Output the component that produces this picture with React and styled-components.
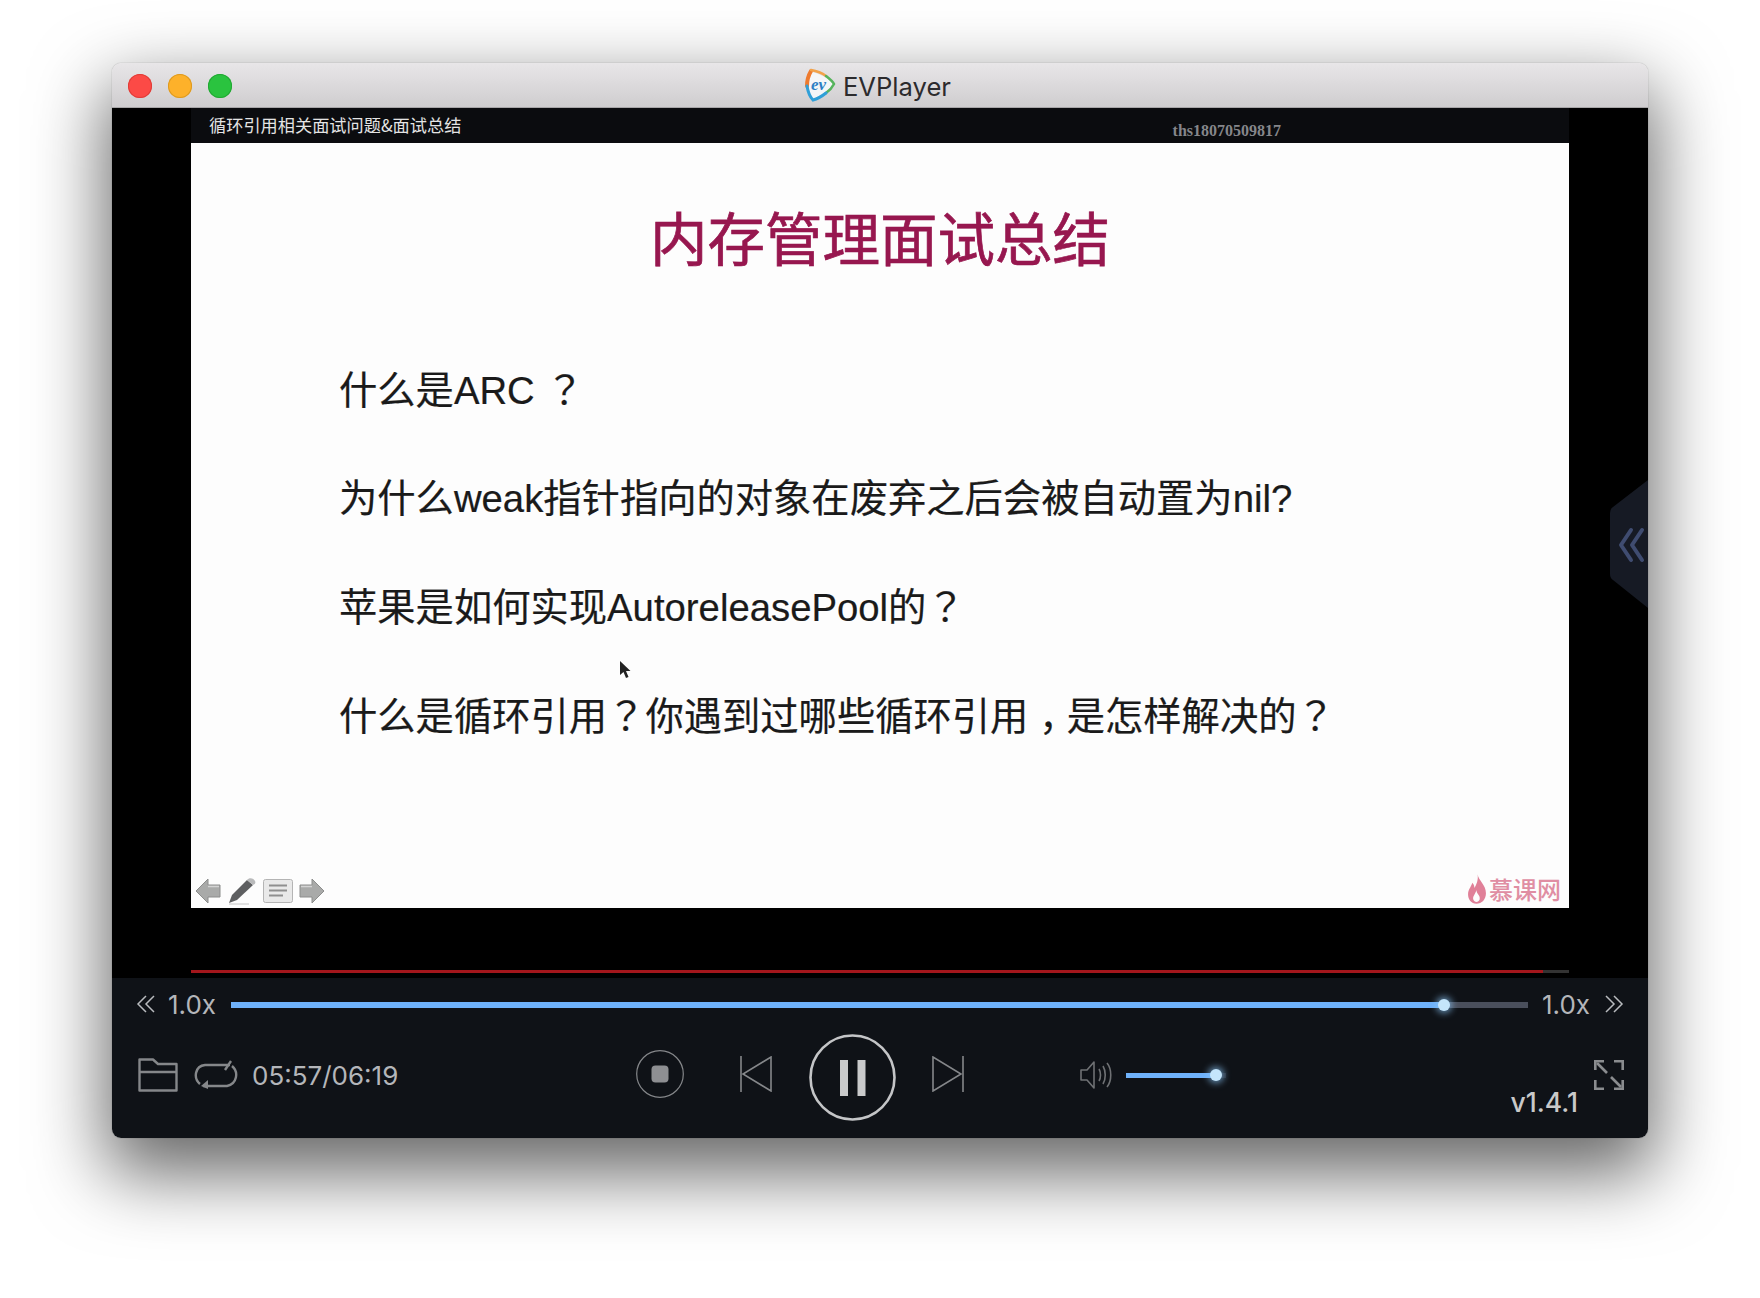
import React from 'react'
import styled, { createGlobalStyle } from 'styled-components'

const Global = createGlobalStyle`
html, body {
  margin: 0;
  padding: 0;
  background: #ffffff;
}
body {
  width: 1760px;
  height: 1298px;
  overflow: hidden;
  font-family: "Inter", "Liberation Sans", sans-serif;
}
`

const Page = styled.div`
width: 1760px;
height: 1298px;
padding: 63px 0 0 112px;
box-sizing: border-box;
`

const Win = styled.div`
width: 1536px;
height: 1075px;
border-radius: 9px;
overflow: hidden;
display: flex;
flex-direction: column;
box-shadow: 0 30px 72px 6px rgba(0,0,0,.6), 0 0 1px rgba(0,0,0,.5);
`

const TitleBar = styled.div`
height: 45px;
flex: none;
position: relative;
display: flex;
align-items: center;
justify-content: center;
gap: 6px;
background: linear-gradient(#e8e6e8, #cfcdcf);
border-bottom: 1px solid #a8a6a8;
box-sizing: border-box;
padding-right: 6px;
`

const Lights = styled.div`
position: absolute;
left: 16px;
top: 11px;
display: flex;
gap: 16px;
`

const Light = styled.span`
width: 24px;
height: 24px;
border-radius: 50%;
background: ${p => p.$color};
box-shadow: inset 0 0 0 1px ${p => p.$edge};
`

const TitleText = styled.span`
font-size: 25.6px;
color: #2c2b2d;
line-height: 30px;
margin-top: 3px;
`

const Video = styled.div`
flex: none;
height: 870px;
background: #000;
padding: 0 79px;
box-sizing: border-box;
display: flex;
flex-direction: column;
position: relative;
`

const VideoHeader = styled.div`
height: 35px;
flex: none;
background: #0b0c0f;
display: flex;
align-items: center;
justify-content: space-between;
padding: 0 288px 0 18px;
`

const LessonName = styled.span`
font-family: "Noto Sans CJK SC", sans-serif;
font-size: 17.2px;
color: #e4e4e4;
margin-top: -2px;
`

const Watermark = styled.span`
font-family: "Liberation Serif", serif;
font-weight: 700;
font-size: 16px;
color: #85868a;
margin-top: 10px;
`

const Slide = styled.div`
flex: none;
height: 765px;
background: #fdfdfd;
display: flex;
flex-direction: column;
position: relative;
font-family: "Liberation Sans", "Noto Sans CJK SC", sans-serif;
`

const SlideTitle = styled.div`
padding-top: 66px;
line-height: 64px;
font-size: 57.5px;
text-align: center;
color: #97174f;
-webkit-text-stroke: .7px #97174f;
`

const Lines = styled.div`
margin-top: 63.5px;
padding-left: 148px;
`

const Line = styled.div`
height: 108.7px;
line-height: 108.7px;
font-size: 38.3px;
color: #1a1a1a;
white-space: pre;
-webkit-text-stroke: .2px #1a1a1a;
`

/* the traditional cut of the font centres full-width punctuation like the slide does */
const Punct = styled.span`
font-family: "Noto Sans CJK TC", sans-serif;
line-height: 0;
`

/* low comma stays in the simplified cut, halved by the font and padded back to a full em */
const Comma = styled.span`
font-feature-settings: "halt";
padding: 0 .22em 0 .28em;
`

const SlideFoot = styled.div`
margin-top: auto;
height: 34px;
padding: 0 8px 0 4px;
display: flex;
align-items: center;
justify-content: space-between;
`

const NavIcons = styled.div`
display: flex;
align-items: center;
gap: 6px;
`

const Brand = styled.div`
display: flex;
align-items: center;
gap: 2px;
font-family: "Noto Sans CJK SC", sans-serif;
font-size: 24px;
font-weight: 500;
line-height: 30px;
color: #e08ea3;
margin-top: -4px;
`

const Cursor = styled.svg`
position: absolute;
left: 428px;
top: 518px;
`

const SideTab = styled.svg`
position: absolute;
right: 0;
top: 372px;
`

const RedTrack = styled.div`
margin-top: 62px;
height: 3px;
background: #333;
`

const RedFill = styled.div`
height: 100%;
background: #a3161c;
`

const Controls = styled.div`
flex: 1;
background: #0f1217;
color: #b4b6ba;
`

const SpeedRow = styled.div`
height: 54px;
padding: 0 24px;
display: flex;
align-items: center;
`

const SpeedText = styled.span`
font-size: 26px;
line-height: 30px;
color: #b4b6ba;
margin: 0 ${p => p.$right}px 0 ${p => p.$left}px;
`

const ChevronBox = styled.svg`
display: block;
flex: none;
margin-top: -3px;
transform: ${p => (p.$flip ? 'scaleX(-1)' : 'none')};
`

const Track = styled.div`
flex: 1;
height: 6px;
position: relative;
background: ${p => p.$rest};
`

const TrackFill = styled.div`
height: 100%;
background: #6fb2fb;
`

const Thumb = styled.span`
position: absolute;
top: 50%;
width: 12px;
height: 12px;
margin: -6px 0 0 -6px;
border-radius: 50%;
background: #c5e6fb;
box-shadow: 0 0 7px 2px rgba(140, 200, 250, .7);
`

const MainRow = styled.div`
height: 86px;
padding: 0 24px 0 26px;
display: flex;
align-items: center;
`

const TimeText = styled.span`
width: 146px;
flex: none;
font-size: 26px;
line-height: 30px;
color: #b4b6ba;
margin-left: 14px;
margin-top: 1px;
white-space: nowrap;
`

const PlainIcon = styled.svg`
display: block;
flex: none;
margin-left: ${p => p.$left || 0}px;
margin-top: ${p => p.$top || 0}px;
`

const VolumeTrack = styled(Track)`
flex: none;
width: 100px;
height: 5px;
margin-left: 14px;
`

const RightGroup = styled.div`
margin-left: auto;
display: flex;
align-items: center;
gap: 16px;
`

const Version = styled.span`
font-size: 26.5px;
font-weight: 500;
line-height: 30px;
color: #c9c9c9;
margin-top: 54px;
`

function AppIcon() {
  return (
    <svg width="34" height="36" viewBox="0 0 34 36">
      <path d="M8 5 C16 6 25 11 30 17 C25 24 16 30 10 32 C5 26 4 12 8 5Z" fill="#f5f6f8" />
      <path d="M8 4 C5 9 4 14 4 19" fill="none" stroke="#ee7a2e" strokeWidth="4" strokeLinecap="round" />
      <path d="M8 3 C14 4 19 6 23 9" fill="none" stroke="#f2a24a" strokeWidth="2.5" strokeLinecap="round" />
      <path d="M23 9 C27 12 30 15 31 17 C29 21 26 24 23 26" fill="none" stroke="#56b45c" strokeWidth="2.5" strokeLinecap="round" />
      <path d="M23 26 C18 30 14 32 10 33 C7 30 5 25 4 19" fill="none" stroke="#2f9fd8" strokeWidth="3" strokeLinecap="round" />
      <text x="8" y="23" fontSize="17" fontStyle="italic" fontWeight="700" fontFamily="Liberation Serif, serif" fill="#2f7fc4">ev</text>
    </svg>
  )
}

function BackArrow({ flip }) {
  return (
    <svg width="26" height="26" viewBox="0 0 26 26" style={flip ? { transform: 'scaleX(-1)' } : undefined}>
      <path d="M1 13 L13 1 V7 H25 V19 H13 V25Z" fill="#a9aaa9" stroke="#8c8d8c" strokeWidth="1" strokeLinejoin="round" />
      <path d="M13 8.5 H24" stroke="#d4d4d4" strokeWidth="1.5" />
    </svg>
  )
}

function Pen() {
  return (
    <svg width="30" height="28" viewBox="0 0 30 28">
      <path d="M2 26 L5 18 L20 3 L26 8 L10 23Z" fill="#5e5f61" />
      <path d="M20 3 C22 0 27 1 28 4 C29 6 28 7 26 8Z" fill="#b9babb" />
      <path d="M2 27 H22" stroke="#c4c4c4" strokeWidth="1" />
    </svg>
  )
}

function ListCard() {
  return (
    <svg width="30" height="26" viewBox="0 0 30 26">
      <rect x=".5" y="1.5" width="29" height="23" rx="2" fill="#e9e9e9" stroke="#b4b4b4" />
      <path d="M6 7.5H24M6 12.5H24M6 17.5H20" stroke="#8f8f8f" strokeWidth="2" />
    </svg>
  )
}

function Flame() {
  return (
    <svg width="20" height="30" viewBox="0 0 19 28">
      <path d="M10 0 C11 6 18 10 18 18 C18 24 14 28 9 28 C4 28 1 24 1 19 C1 14 4 12 5 8 C7 10 7 12 7 13 C9 10 11 5 10 0Z" fill="#e08098" />
      <path d="M9 15 C9 19 13 20 12 24 C11 27 7 27 6 24 C5 21 8 19 9 15Z" fill="#fdfdfd" />
    </svg>
  )
}

function Chevrons({ flip }) {
  return (
    <ChevronBox $flip={flip} width="19" height="18" viewBox="0 0 19 18">
      <path d="M10 1 L2 9 L10 17 M18 1 L10 9 L18 17" fill="none" stroke="#b9bbbf" strokeWidth="1.5" />
    </ChevronBox>
  )
}

function App() {
  return (
    <Page>
      <Global />
      <Win>
        <TitleBar>
          <Lights>
            <Light $color="#fc4a46" $edge="#df3d38" />
            <Light $color="#fdb12a" $edge="#dd9a20" />
            <Light $color="#2ac33f" $edge="#22a733" />
          </Lights>
          <AppIcon />
          <TitleText>EVPlayer</TitleText>
        </TitleBar>

        <Video>
          <VideoHeader>
            <LessonName>循环引用相关面试问题&面试总结</LessonName>
            <Watermark>ths18070509817</Watermark>
          </VideoHeader>
          <Slide>
            <SlideTitle>内存管理面试总结</SlideTitle>
            <Lines>
              <Line>什么是ARC <Punct>？</Punct></Line>
              <Line>为什么weak指针指向的对象在废弃之后会被自动置为nil?</Line>
              <Line>苹果是如何实现AutoreleasePool的<Punct>？</Punct></Line>
              <Line>什么是循环引用<Punct>？</Punct>你遇到过哪些循环引用<Comma>，</Comma>是怎样解决的<Punct>？</Punct></Line>
            </Lines>
            <SlideFoot>
              <NavIcons>
                <BackArrow />
                <Pen />
                <ListCard />
                <BackArrow flip />
              </NavIcons>
              <Brand>
                <Flame />
                慕课网
              </Brand>
            </SlideFoot>
            <Cursor width="12" height="18" viewBox="0 0 12 18">
              <path d="M1 0 V14 L4.5 11 L7 17 L9.5 16 L7 10 H11.5Z" fill="#222" />
            </Cursor>
          </Slide>
          <RedTrack>
            <RedFill style={{ width: '98.1%' }} />
          </RedTrack>
          <SideTab width="38" height="128" viewBox="0 0 38 128">
            <path d="M38 0 L3 27 Q0 29 0 33 V94 Q0 98 3 100 L38 128Z" fill="#161a24" />
            <path d="M21 50 L11 65 L21 80 M32 50 L22 65 L32 80" fill="none" stroke="#3f4c70" strokeWidth="4" strokeLinecap="round" strokeLinejoin="round" />
          </SideTab>
        </Video>

        <Controls>
          <SpeedRow>
            <Chevrons />
            <SpeedText $left={13} $right={15}>1.0x</SpeedText>
            <Track $rest="#4a4f5c">
              <TrackFill style={{ width: '93.5%' }} />
              <Thumb style={{ left: '93.5%' }} />
            </Track>
            <SpeedText $left={14} $right={15}>1.0x</SpeedText>
            <Chevrons flip />
          </SpeedRow>

          <MainRow>
            <PlainIcon width="40" height="34" viewBox="0 0 40 34" fill="none" stroke="#85878a" strokeWidth="2.4">
              <path d="M1.5 32.5 V1.5 H15 L20 6 H38.5 V32.5Z" strokeLinejoin="round" />
              <path d="M1.5 14 H38.5" />
            </PlainIcon>
            <PlainIcon $left={16} width="44" height="30" viewBox="0 0 44 30" fill="none" stroke="#85878a" strokeWidth="2.4">
              <path d="M6 24 C-1 18 1 6 11 5 H36" />
              <path d="M38 6 C45 12 43 24 33 26 H9" />
              <path d="M31 10 L37 1" />
              <path d="M7 26 L14 20 V29Z" fill="#85878a" stroke="none" />
            </PlainIcon>
            <TimeText>05:57/06:19</TimeText>

            <PlainIcon $left={238} $top={-2} width="48" height="48" viewBox="0 0 48 48" fill="none">
              <circle cx="24" cy="24" r="23.3" stroke="#85878a" strokeWidth="1.2" />
              <rect x="15.5" y="15.5" width="17" height="17" rx="4" fill="#8e8f92" />
            </PlainIcon>
            <PlainIcon $left={56} $top={-2} width="32" height="36" viewBox="0 0 32 36" fill="none" stroke="#85878a" strokeWidth="1.6">
              <path d="M1 0 V36" />
              <path d="M31 1 V35 L3 18Z" />
            </PlainIcon>
            <PlainIcon $left={37} $top={4} width="87" height="87" viewBox="0 0 87 87" fill="none">
              <circle cx="43.5" cy="43.5" r="42" stroke="#c4c5c7" strokeWidth="2.6" />
              <rect x="31" y="26" width="8" height="36" fill="#c9cacb" />
              <rect x="48.5" y="26" width="8" height="36" fill="#c9cacb" />
            </PlainIcon>
            <PlainIcon $left={36} $top={-2} width="32" height="36" viewBox="0 0 32 36" fill="none" stroke="#85878a" strokeWidth="1.6">
              <path d="M31 0 V36" />
              <path d="M1 1 V35 L29 18Z" />
            </PlainIcon>

            <PlainIcon $left={116} width="32" height="30" viewBox="0 0 32 30" fill="none" stroke="#6f7174" strokeWidth="1.6">
              <path d="M1 10 H7 L14 2 V28 L7 20 H1Z" strokeLinejoin="round" />
              <path d="M19 9 C21 12 21 18 19 21" />
              <path d="M23 6 C26 11 26 19 23 24" />
              <path d="M27 3 C32 9 32 21 27 27" />
            </PlainIcon>
            <VolumeTrack $rest="#23262e">
              <TrackFill style={{ width: '90%' }} />
              <Thumb style={{ left: '90%' }} />
            </VolumeTrack>

            <RightGroup>
              <Version>v1.4.1</Version>
              <PlainIcon width="30" height="30" viewBox="0 0 30 30" fill="none" stroke="#8a8c8f" strokeWidth="2.6">
                <path d="M1.3 10 V1.3 H10" />
                <path d="M20 1.3 H28.7 V10" />
                <path d="M1.3 20 V28.7 H10" />
                <path d="M20 28.7 H28.7 V20" />
                <path d="M3 3 L13 13" />
                <path d="M17 17 L27 27" />
              </PlainIcon>
            </RightGroup>
          </MainRow>
        </Controls>
      </Win>
    </Page>
  )
}

export default App
